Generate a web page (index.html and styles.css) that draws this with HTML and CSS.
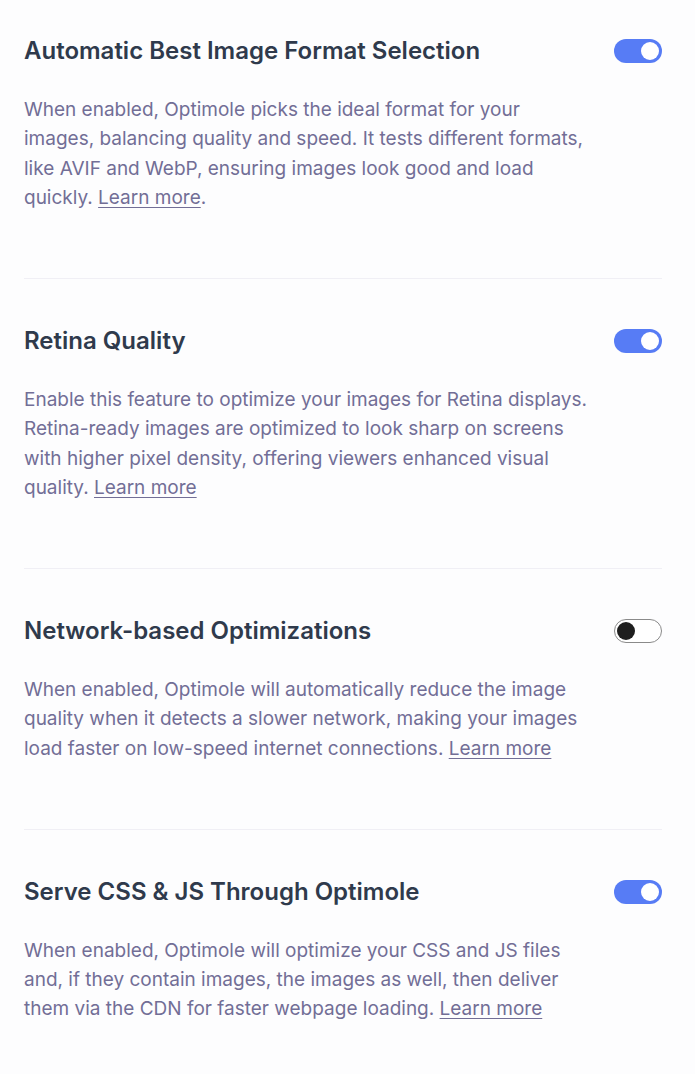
FILE: index.html
```html
<!DOCTYPE html>
<html lang="en">
<head>
<meta charset="utf-8">
<title>Optimole settings</title>
<link rel="stylesheet" href="styles.css">
</head>
<body>
<div class="settings">
  <section class="setting">
    <div class="setting-head">
      <h2 class="setting-title">Automatic Best Image Format Selection</h2>
      <span class="toggle toggle-on"><span class="knob"></span></span>
    </div>
    <p class="setting-desc">When enabled, Optimole picks the ideal format for your images, balancing quality and speed. It tests different formats, like AVIF and WebP, ensuring images look good and load quickly. <a href="#" class="learn">Learn more</a>.</p>
  </section>
  <section class="setting">
    <div class="setting-head">
      <h2 class="setting-title">Retina Quality</h2>
      <span class="toggle toggle-on"><span class="knob"></span></span>
    </div>
    <p class="setting-desc">Enable this feature to optimize your images for Retina displays. Retina-ready images are optimized to look sharp on screens with higher pixel density, offering viewers enhanced visual quality. <a href="#" class="learn">Learn more</a></p>
  </section>
  <section class="setting">
    <div class="setting-head">
      <h2 class="setting-title">Network-based Optimizations</h2>
      <span class="toggle toggle-off"><span class="knob"></span></span>
    </div>
    <p class="setting-desc">When enabled, Optimole will automatically reduce the image quality when it detects a slower network, making your images load faster on low-speed internet connections. <a href="#" class="learn">Learn more</a></p>
  </section>
  <section class="setting">
    <div class="setting-head">
      <h2 class="setting-title">Serve CSS &amp; JS Through Optimole</h2>
      <span class="toggle toggle-on"><span class="knob"></span></span>
    </div>
    <p class="setting-desc">When enabled, Optimole will optimize your CSS and JS files and, if they contain images, the images as well, then deliver them via the CDN for faster webpage loading. <a href="#" class="learn">Learn more</a></p>
  </section>
</div>
</body>
</html>
```

FILE: styles.css
```css
html, body {
  margin: 0;
  padding: 0;
  background: #fdfdfe;
}
body {
  font-family: Inter, "Noto Sans", sans-serif;
  -webkit-font-smoothing: antialiased;
}
.settings {
  padding: 0 33px 0 24px;
}
.setting {
  padding: 46px 0 66px;
  border-bottom: 1px solid #f0eff5;
}
.setting:first-child {
  padding-top: 35px;
}
.setting:last-child {
  border-bottom: none;
}
.setting-head {
  display: flex;
  align-items: center;
  justify-content: space-between;
}
.setting-title {
  margin: 0;
  font-size: 24px;
  line-height: 32px;
  font-weight: 600;
  color: #2f3a4c;
}
.setting-desc {
  margin: 28px 0 0;
  max-width: 570px;
  font-size: 19px;
  line-height: 29.25px;
  color: #726e96;
}
.learn {
  color: #726e96;
  text-decoration: underline;
  text-underline-offset: 3px;
}
.toggle {
  position: relative;
  flex: none;
  width: 48px;
  height: 24px;
  border-radius: 12px;
  box-sizing: border-box;
}
.toggle-on {
  background: #577cf5;
}
.toggle-off {
  background: #ffffff;
  border: 1px solid #8a8a8a;
}
.knob {
  position: absolute;
  top: 3px;
  width: 18px;
  height: 18px;
  border-radius: 50%;
}
.toggle-on .knob {
  right: 3px;
  background: #ffffff;
}
.toggle-off .knob {
  left: 2px;
  top: 2px;
  background: #1e1e1e;
}
```
